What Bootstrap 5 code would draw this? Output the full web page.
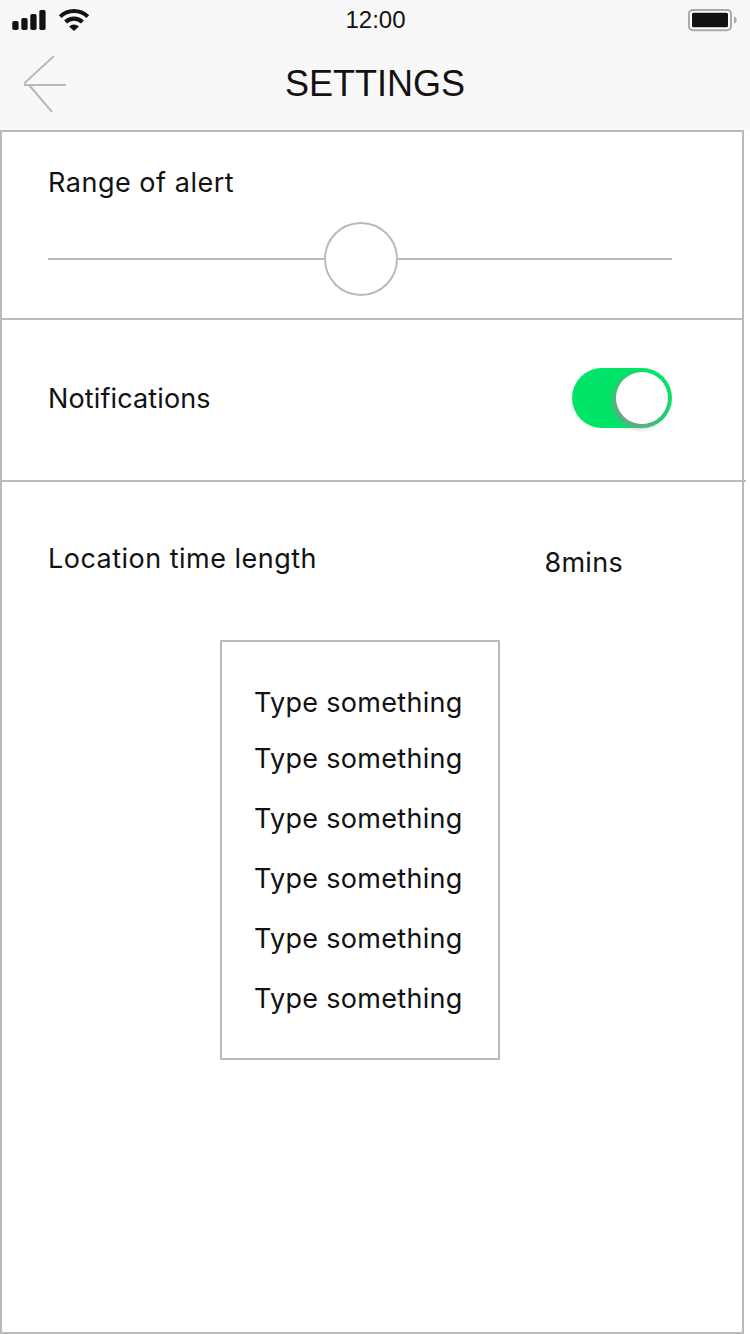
<!DOCTYPE html>
<html lang="en">
<head>
<meta charset="utf-8">
<meta name="viewport" content="width=device-width, initial-scale=1">
<title>Settings</title>
<link href="https://cdn.jsdelivr.net/npm/bootstrap@5.3.0/dist/css/bootstrap.min.css" rel="stylesheet">
<style>
  :root { --line: #bababa; --ink: #121212; }
  body { width: 750px; height: 1334px; overflow: hidden; color: var(--ink); background: #fff; font: 27px/40px Inter, sans-serif; }
  .topbar { height: 130px; background: #f8f8f8; font-family: "Liberation Sans", Arial, sans-serif; }
  .status { height: 40px; display: grid; grid-template-columns: 1fr auto 1fr; }
  .clock { font-size: 24px; line-height: 40px; padding-left: 1px; }
  .titlebar { height: 90px; display: grid; grid-template-columns: 1fr auto 1fr; }
  .titlebar h1 { font-size: 36px; line-height: 40px; font-weight: 400; margin: 24px 0 0; }
  .panel { width: 744px; height: 1204px; border: 2px solid var(--line); }
  .sec { padding: 0 70px 0 46px; border-bottom: 2px solid var(--line); }
  .sec-range { height: 188px; padding-top: 31px; }
  .sec-notify { height: 162px; width: 744px; padding-right: 74px; padding-bottom: 4px; }
  .sec-time { height: 158px; padding: 57px 119px 0 46px; }
  .track { height: 74px; margin-top: 19px; background: linear-gradient(var(--line), var(--line)) 0 36px / 100% 2px no-repeat; }
  .knob { width: 74px; height: 74px; margin-left: 276px; border: 2px solid var(--line); background: #fff; }
  .toggle { width: 100px; height: 60px; padding: 4px; background: #00e567; }
  .toggle-knob { width: 52px; height: 52px; background: #fff; box-shadow: -2px 3px 6px #8f8f8f; }
  .picker { width: 280px; height: 420px; margin-left: 218px; border: 2px solid var(--line); padding: 41px 0 0 32px; }
  .picker li { height: 60px; }
  .picker li:first-child { height: 56px; }
  .t1 { letter-spacing: .52px; } .t2 { letter-spacing: .13px; padding-top: 2px; } .t3 { letter-spacing: .48px; } .t4 { letter-spacing: .3px; } .t5 { letter-spacing: .3px; }
</style>
</head>
<body>
<header class="topbar">
  <div class="status">
    <svg width="100" height="40" viewBox="0 0 100 40" fill="#121212" aria-hidden="true">
      <rect x="12.3" y="21" width="6.3" height="9" rx="1.8"/><rect x="21.3" y="18" width="6.3" height="12" rx="1.8"/><rect x="30.3" y="14" width="6.3" height="16" rx="1.8"/><rect x="39.3" y="10" width="6.3" height="20" rx="1.8"/>
      <g fill="none" stroke="#121212"><path d="M60.2 16.6a20 20 0 0 1 27.6 0" stroke-width="4"/><path d="M65.6 22a12 12 0 0 1 16.8 0" stroke-width="4.2"/></g>
      <path d="M69.1 26.5a6.8 6.8 0 0 1 9.8 0L74 31z"/>
    </svg>
    <span class="clock">12:00</span>
    <svg class="ms-auto" width="70" height="40" viewBox="680 0 70 40" aria-hidden="true">
      <rect x="689" y="9.9" width="42" height="20.3" rx="4" fill="#fff" stroke="#a8a8a8" stroke-width="2"/>
      <rect x="692" y="12.8" width="36" height="14.4" rx="1.5" fill="#121212"/><path d="M734 16.2q2.8 1 2.8 3.8T734 23.8z" fill="#a8a8a8"/>
    </svg>
  </div>
  <div class="titlebar">
    <svg width="80" height="90" viewBox="0 40 80 90" fill="none" stroke="#bababa" stroke-width="2" role="img" aria-label="Back"><path d="M54 56 24 83.5M24 85h42M29.5 85.5 52 112"/></svg>
    <h1>SETTINGS</h1><span></span>
  </div>
</header>
<main class="panel">
  <section class="sec sec-range">
    <div class="t1">Range of alert</div>
    <div class="track"><div class="knob rounded-circle"></div></div>
  </section>
  <section class="sec sec-notify d-flex align-items-center justify-content-between">
    <span class="t2">Notifications</span>
    <div class="toggle rounded-pill d-flex justify-content-end" role="switch" aria-checked="true" aria-label="Notifications"><div class="toggle-knob rounded-circle"></div></div>
  </section>
  <section class="sec-time d-flex justify-content-between">
    <span class="t3">Location time length</span>
    <span class="t4 pt-1">8mins</span>
  </section>
  <ul class="picker list-unstyled mb-0 t5">
    <li>Type something</li><li>Type something</li><li>Type something</li><li>Type something</li><li>Type something</li><li>Type something</li>
  </ul>
</main>
<script src="https://cdn.jsdelivr.net/npm/bootstrap@5.3.0/dist/js/bootstrap.bundle.min.js"></script>
</body>
</html>
